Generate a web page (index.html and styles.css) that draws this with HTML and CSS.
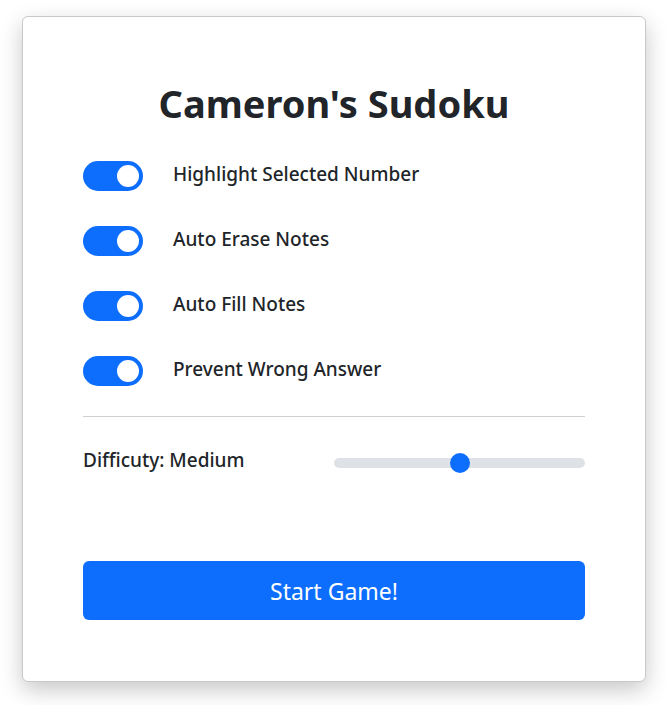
FILE: index.html
```html
<!DOCTYPE html>
<html>
<head>
<meta charset="utf-8">
<link rel="stylesheet" href="styles.css">
</head>
<body>
<div class="card">
  <h1 class="title">Cameron's Sudoku</h1>
  <div class="options">
    <div class="opt"><span class="switch"><span class="knob"></span></span><span class="label">Highlight Selected Number</span></div>
    <div class="opt"><span class="switch"><span class="knob"></span></span><span class="label">Auto Erase Notes</span></div>
    <div class="opt"><span class="switch"><span class="knob"></span></span><span class="label">Auto Fill Notes</span></div>
    <div class="opt"><span class="switch"><span class="knob"></span></span><span class="label">Prevent Wrong Answer</span></div>
  </div>
  <div class="divider"></div>
  <div class="difficulty">
    <span class="label">Difficuty: Medium</span>
    <div class="slider"><div class="track"><span class="thumb"></span></div></div>
  </div>
  <button class="start">Start Game!</button>
</div>
</body>
</html>
```
FILE: styles.css
```css
html, body { margin: 0; padding: 0; background: #fff; }
body {
  font-family: "Noto Sans", "Open Sans", sans-serif;
  color: #212529;
  padding: 16px 0 40px 0;
}
.card {
  width: 624px;
  margin: 0 0 0 22px;
  border: 1px solid #c9c9c9;
  border-radius: 6px;
  background: #fff;
  box-shadow: 0 8px 22px rgba(0,0,0,0.22);
  padding: 60px 60px 60px 60px;
  box-sizing: border-box;
  height: 666px;
}
.title {
  margin: 0 0 32px 0;
  text-align: center;
  font-size: 38px;
  font-weight: 700;
  line-height: 52px;
}
.options { display: flex; flex-direction: column; gap: 35px; }
.opt { display: flex; align-items: center; gap: 30px; height: 30px; }
.switch {
  width: 60px; height: 30px; border-radius: 15px; background: #0d6efd;
  display: flex; align-items: center; justify-content: flex-end; padding-right: 4px; box-sizing: border-box;
}
.knob { width: 22px; height: 22px; border-radius: 50%; background: #fff; }
.label { font-size: 19px; font-weight: 500; line-height: 1.2; padding-bottom: 3px; }
.divider { height: 1px; background: #cfcfcf; margin: 30px 0 27px 0; }
.difficulty { display: grid; grid-template-columns: 1fr 1fr; align-items: center; height: 30px; }
.difficulty .label { padding-bottom: 0; padding-top: 2px; }
.slider { display: flex; align-items: center; }
.track { position: relative; width: 100%; height: 10px; border-radius: 5px; background: #dee2e6; margin-top: 7px; }
.thumb { position: absolute; left: 50%; top: 50%; width: 20px; height: 20px; margin: -10px 0 0 -10px; border-radius: 50%; background: #0d6efd; }
.start {
  display: block; width: 100%; height: 59px; margin-top: 87px;
  background: #0d6efd; color: #fff; border: none; border-radius: 6px;
  font-family: "Noto Sans", "Open Sans", sans-serif; font-size: 23px; font-weight: 400;
}
```
